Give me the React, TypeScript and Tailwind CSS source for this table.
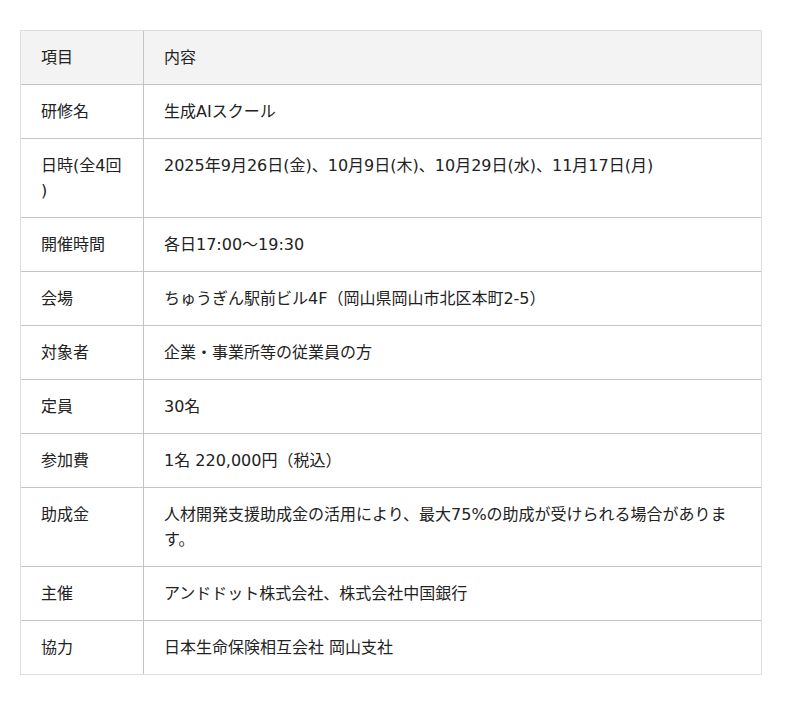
const rows: { label: string; value: string }[] = [
  { label: '研修名', value: '生成AIスクール' },
  { label: '日時(全4回)', value: '2025年9月26日(金)、10月9日(木)、10月29日(水)、11月17日(月)' },
  { label: '開催時間', value: '各日17:00〜19:30' },
  { label: '会場', value: 'ちゅうぎん駅前ビル4F（岡山県岡山市北区本町2-5）' },
  { label: '対象者', value: '企業・事業所等の従業員の方' },
  { label: '定員', value: '30名' },
  { label: '参加費', value: '1名 220,000円（税込）' },
  { label: '助成金', value: '人材開発支援助成金の活用により、最大75%の助成が受けられる場合があります。' },
  { label: '主催', value: 'アンドドット株式会社、株式会社中国銀行' },
  { label: '協力', value: '日本生命保険相互会社 岡山支社' },
];

export default function App() {
  return (
    <div
      className="bg-white min-h-[705px] pt-[30px] pl-[20px] text-[16px] leading-[25px] text-[#222]"
      style={{ fontFamily: '"DejaVu Sans", "Noto Sans CJK JP", sans-serif' }}
    >
      <table className="w-[742px] table-fixed border-separate border-spacing-0 border border-[#dedede]">
        <colgroup>
          <col className="w-[123px]" />
          <col />
        </colgroup>
        <thead>
          <tr className="bg-[#f3f3f3]">
            <th className="text-left font-normal pl-5 pr-[17px] py-[14px] border-b border-r border-[#c4c4c4]">項目</th>
            <th className="text-left font-normal px-5 py-[14px] border-b border-[#c4c4c4]">内容</th>
          </tr>
        </thead>
        <tbody>
          {rows.map((row, i) => {
            const last = i === rows.length - 1;
            return (
              <tr key={row.label}>
                <td
                  className={
                    'align-top pl-5 pr-[17px] py-[14px] border-r border-[#c4c4c4] [line-break:anywhere]' +
                    (last ? '' : ' border-b')
                  }
                >
                  {row.label}
                </td>
                <td className={'align-top px-5 py-[14px] border-[#c4c4c4]' + (last ? '' : ' border-b')}>
                  {row.value}
                </td>
              </tr>
            );
          })}
        </tbody>
      </table>
    </div>
  );
}
